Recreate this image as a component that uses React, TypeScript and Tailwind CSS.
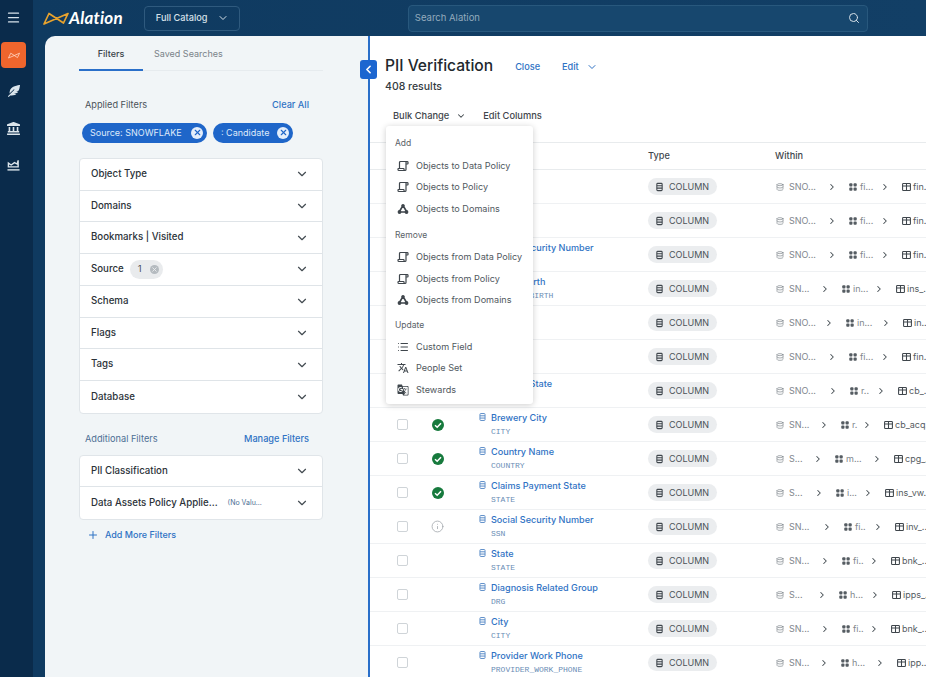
import { ChevronDown, ChevronLeft, ChevronRight, Database, Info, List, Menu, Plus, Scroll, Search, X } from "lucide-react";
import { FaFeatherAlt, FaLandmark } from "react-icons/fa";
import { MdGTranslate, MdTranslate } from "react-icons/md";

type Row = {
  name?: string;
  sub?: string;
  status?: "ok" | "info";
  a: string;
  w1: number;
  b: string;
  w2: number;
  c: string;
};

// rows 0, 1, 4 and 5 sit fully behind the open menu
const rows: Row[] = [
  { a: "SNO...", w1: 73, b: "fi...", w2: 53, c: "fin.." },
  { a: "SNO...", w1: 73, b: "fi...", w2: 53, c: "fin.." },
  { name: "Social Security Number", sub: "SSN", a: "SNO...", w1: 73, b: "fi...", w2: 53, c: "fin.." },
  { name: "Date of Birth", sub: "DATE_OF_BIRTH", a: "SN...", w1: 66, b: "in...", w2: 54, c: "ins_.." },
  { a: "SNO...", w1: 70, b: "in...", w2: 57, c: "in.." },
  { a: "SNO...", w1: 73, b: "fi...", w2: 53, c: "fin.." },
  { name: "Brewery State", sub: "STATE", a: "SNO...", w1: 74, b: "r..", w2: 48, c: "cb_.." },
  { name: "Brewery City", sub: "CITY", status: "ok", a: "SN...", w1: 65, b: "r.", w2: 43, c: "cb_acq.." },
  { name: "Country Name", sub: "COUNTRY", status: "ok", a: "S...", w1: 59, b: "m...", w2: 59, c: "cpg_.." },
  { name: "Claims Payment State", sub: "STATE", status: "ok", a: "S...", w1: 60, b: "i...", w2: 49, c: "ins_vw.." },
  { name: "Social Security Number", sub: "SSN", status: "info", a: "SN...", w1: 68, b: "fi..", w2: 51, c: "inv_.." },
  { name: "State", sub: "STATE", a: "SN...", w1: 66, b: "fi..", w2: 49, c: "bnk_.." },
  { name: "Diagnosis Related Group", sub: "DRG", a: "S...", w1: 63, b: "h...", w2: 53, c: "ipps_.." },
  { name: "City", sub: "CITY", a: "SN...", w1: 66, b: "fi..", w2: 49, c: "bnk_.." },
  { name: "Provider Work Phone", sub: "PROVIDER_WORK_PHONE", a: "SN...", w1: 65, b: "h...", w2: 56, c: "ipp..." },
];

const ColumnIcon = ({ className }: { className?: string }) => (
  <svg viewBox="0 0 10 12" className={className} fill="none" stroke="currentColor" strokeWidth="1.5">
    <rect x="1.2" y="0.8" width="7.6" height="10.4" rx="1.2" />
    <path d="M1.2 4.2h7.6M1.2 7.6h7.6" />
  </svg>
);

const SchemaIcon = () => (
  <svg viewBox="0 0 9 9" className="h-[8px] w-[8px] shrink-0" fill="#555c62">
    <rect x="0.3" y="0.3" width="3.6" height="3.6" rx="1" />
    <rect x="5.1" y="0.3" width="3.6" height="3.6" rx="1" />
    <rect x="0.3" y="5.1" width="3.6" height="3.6" rx="1" />
    <rect x="5.1" y="5.1" width="3.6" height="3.6" rx="1" />
  </svg>
);

const TableIcon = () => (
  <svg viewBox="0 0 10 9" className="h-[8px] w-[9px] shrink-0" fill="none" stroke="#3f464c" strokeWidth="1.2">
    <rect x="0.6" y="0.6" width="8.8" height="7.8" rx="0.8" />
    <path d="M0.6 3.4h8.8M5 0.6v7.8" />
  </svg>
);

const DomainIcon = () => (
  <svg viewBox="0 0 12 12" className="h-[12px] w-[12px]" fill="currentColor" stroke="currentColor">
    <path d="M6 2.4 9.8 9H2.2Z" fill="none" strokeWidth="1.7" strokeLinejoin="round" />
    <circle cx="6" cy="2.6" r="1.7" stroke="none" />
    <circle cx="2.5" cy="9" r="1.9" stroke="none" />
    <circle cx="9.5" cy="9" r="1.9" stroke="none" />
  </svg>
);

const LogoMark = ({ className, color }: { className?: string; color: string }) => (
  <svg viewBox="0 0 26 13" className={className} fill="none" stroke={color} strokeWidth="1.7" strokeLinejoin="round">
    <path d="M1 12 6 1.5 20.5 11 25 1.5Z" />
  </svg>
);

const ChartIcon = () => (
  <svg viewBox="0 0 14 14" className="h-[13px] w-[13px]" fill="none" stroke="#dbe5ec" strokeWidth="1.5">
    <path d="M1.5 9.5V5.5l3 2 3.5-2.5 3 1.5 1-4V9.5Z" />
    <path d="M.5 12.8h13" />
  </svg>
);

const AccordionRow = ({ label, children }: { label: string; children?: React.ReactNode }) => (
  <div className="flex h-[31.75px] items-center border-b border-[#dfe4e8] pl-[11px] pr-[13px] last:border-b-0">
    <span className="text-[9.7px] font-medium text-[#2b3238]">{label}</span>
    {children}
    <ChevronDown className="ml-auto h-[14px] w-[14px] text-[#444c52]" strokeWidth={2} />
  </div>
);

const MenuItem = ({ icon, label }: { icon: React.ReactNode; label: string }) => (
  <div className="flex h-[21.5px] items-center pl-[11px] text-[9.1px] text-[#50585e]">
    <span className="flex w-[19px] shrink-0 text-[#3f464c]">{icon}</span>
    {label}
  </div>
);

const scroll = <Scroll className="h-[12px] w-[12px] -scale-x-100" strokeWidth={2.4} />;
const domains = <DomainIcon />;

export default function App() {
  return (
    <div className="flex h-[677px] w-[926px] overflow-hidden bg-[#0f3a60] font-['Inter',sans-serif]">
      {/* icon rail */}
      <nav className="flex w-[33px] shrink-0 flex-col items-center bg-[#0a2b4b] pr-[6px] pt-[10px]">
        <Menu className="h-[15px] w-[15px] text-[#d8e3eb]" strokeWidth={2} />
        <div className="ml-[1px] mt-[17px] flex h-[26px] w-[25px] items-center justify-center self-start rounded-[4px] bg-[#ee652d]">
          <LogoMark className="h-[7px] w-[12px]" color="#ffd9c8" />
        </div>
        <FaFeatherAlt className="mt-[17px] h-[12px] w-[12px] text-[#dbe5ec]" />
        <FaLandmark className="mt-[25px] h-[13px] w-[13px] text-[#dbe5ec]" />
        <div className="mt-[23px] flex">
          <ChartIcon />
        </div>
      </nav>

      <div className="flex min-w-0 flex-1 flex-col">
        {/* top bar */}
        <header className="flex h-[36px] shrink-0 items-center bg-gradient-to-r from-[#0f3a60] to-[#123f66] pl-[10px]">
          <LogoMark className="h-[13px] w-[26px]" color="#e8a32e" />
          <span className="font-['Lato',sans-serif] text-[17px] font-bold italic tracking-[0.2px] text-white">Alation</span>
          <div className="ml-[21px] flex h-[25px] w-[96px] items-center rounded-[4px] border border-[#2f5a7e] pl-[11px] text-[9.2px] font-medium text-[#d6e1e9]">
            Full Catalog
            <ChevronDown className="ml-[10px] h-[12px] w-[12px]" strokeWidth={2} />
          </div>
          <div className="ml-[168px] flex h-[27px] w-[460px] items-center justify-between rounded-[4px] border border-[#28587d] bg-[#17476e] pl-[6px] pr-[7px] text-[9.5px] text-[#93abbd]">
            Search Alation
            <Search className="h-[12px] w-[12px] text-[#d6e1e9]" strokeWidth={2} />
          </div>
        </header>

        <main className="flex min-h-0 flex-1 pl-[12px]">
          {/* filters */}
          <aside className="w-[323px] shrink-0 rounded-tl-[10px] bg-[#f1f5f7] pl-[34px] pr-[45px]">
            <div className="flex h-[35px] items-end border-b border-[#e6ebee] text-[9px]">
              <div className="-mb-px flex h-full w-[64px] items-center justify-center border-b-2 border-[#2a6fc9] pt-[2px] font-medium text-[#3a4248]">Filters</div>
              <div className="ml-[11px] flex h-full items-center pt-[2px] text-[#7a8389]">Saved Searches</div>
            </div>
            <div className="mt-[27px] flex items-center justify-between pl-[6px] pr-[14px] text-[9.2px]">
              <span className="text-[#4a5258]">Applied Filters</span>
              <span className="font-medium text-[#2f72c4]">Clear All</span>
            </div>
            <div className="mt-[11px] flex gap-[6px] pl-[3px]">
              <div className="flex h-[20px] w-[125px] items-center justify-between rounded-full bg-[#1f66c9] pl-[8px] pr-[4px] text-[9px] text-[#dfeafa]">
                Source: SNOWFLAKE
                <span className="flex h-[12px] w-[12px] items-center justify-center rounded-full bg-[#e4eefb]">
                  <X className="h-[9px] w-[9px] text-[#1f66c9]" strokeWidth={3} />
                </span>
              </div>
              <div className="flex h-[20px] w-[80px] items-center justify-between rounded-full bg-[#1f66c9] pl-[8px] pr-[4px] text-[9px] text-[#dfeafa]">
                : Candidate
                <span className="flex h-[12px] w-[12px] items-center justify-center rounded-full bg-[#e4eefb]">
                  <X className="h-[9px] w-[9px] text-[#1f66c9]" strokeWidth={3} />
                </span>
              </div>
            </div>

            <div className="mt-[15px] rounded-[4px] border border-[#e0e5e9] bg-white">
              <AccordionRow label="Object Type" />
              <AccordionRow label="Domains" />
              <AccordionRow label="Bookmarks | Visited" />
              <AccordionRow label="Source">
                <span className="ml-[6px] flex h-[19px] w-[33px] items-center justify-between rounded-full bg-[#e9ebed] pl-[8px] pr-[4px] text-[9.5px] text-[#4a5258]">
                  1
                  <span className="flex h-[9px] w-[9px] items-center justify-center rounded-full bg-[#b4babf]">
                    <X className="h-[7px] w-[7px] text-[#eceeef]" strokeWidth={3} />
                  </span>
                </span>
              </AccordionRow>
              <AccordionRow label="Schema" />
              <AccordionRow label="Flags" />
              <AccordionRow label="Tags" />
              <AccordionRow label="Database" />
            </div>

            <div className="mt-[18px] flex items-center justify-between pl-[6px] pr-[14px] text-[9.2px]">
              <span className="text-[#4d6f94]">Additional Filters</span>
              <span className="font-medium text-[#2f72c4]">Manage Filters</span>
            </div>
            <div className="mt-[9px] rounded-[4px] border border-[#e0e5e9] bg-white">
              <AccordionRow label="PII Classification" />
              <AccordionRow label="Data Assets Policy Applie...">
                <span className="ml-[10px] text-[7px] text-[#4d6f94]">(No Valu...</span>
              </AccordionRow>
            </div>
            <div className="mt-[8px] flex items-center pl-[8px] text-[9px] font-medium text-[#2f72c4]">
              <Plus className="mr-[6px] h-[12px] w-[12px]" strokeWidth={2} />
              Add More Filters
            </div>
          </aside>

          {/* results */}
          <section className="relative min-w-0 flex-1 border-l-2 border-[#2a6fc9] bg-white">
            <button className="absolute -left-[10px] top-[24px] flex h-[19px] w-[17px] items-center justify-center rounded-[3px] bg-[#1c66d0]">
              <ChevronLeft className="h-[13px] w-[13px] text-white" strokeWidth={3} />
            </button>

            <div className="flex h-[41px] items-end pl-[15px]">
              <h1 className="text-[15.6px] font-medium leading-[22px] text-[#22282d]">PII Verification</h1>
              <span className="ml-[22px] pb-[3px] text-[9.2px] font-medium text-[#2f72c4]">Close</span>
              <span className="ml-[22px] flex items-center pb-[3px] text-[9.2px] font-medium text-[#2f72c4]">
                Edit
                <ChevronDown className="ml-[7px] h-[12px] w-[12px]" strokeWidth={2} />
              </span>
            </div>
            <div className="mt-[3px] pl-[15px] text-[10.5px] font-medium leading-[14px] text-[#343b41]">408 results</div>
            <div className="mt-[14px] flex h-[16px] items-center pl-[23px] text-[9.3px] font-medium text-[#3f464c]">
              Bulk Change
              <ChevronDown className="ml-[7px] h-[10px] w-[10px]" strokeWidth={2.5} />
              <span className="ml-[17px]">Edit Columns</span>
            </div>

            {/* table */}
            <div className="mt-[18px] flex h-[28px] items-center border-y border-[#e8ebed] text-[9.2px] font-medium text-[#3f464c]">
              <span className="ml-[278px] w-[127px]">Type</span>
              <span>Within</span>
            </div>
            {rows.map((row, i) => (
              <div key={i} className="flex h-[34px] shrink-0 items-center border-b border-[#eff1f3]">
                <span className="ml-[27px] h-[11px] w-[11px] shrink-0 rounded-[2px] border border-[#cfd4d8] bg-white" />
                <span className="ml-[23px] flex w-[13px] shrink-0 justify-center">
                  {row.status === "ok" && (
                    <svg viewBox="0 0 12 12" className="h-[12px] w-[12px]">
                      <circle cx="6" cy="6" r="6" fill="#177a3d" />
                      <path d="M3 6.2 5.2 8.3 9 4.2" fill="none" stroke="#fff" strokeWidth="1.5" />
                    </svg>
                  )}
                  {row.status === "info" && <Info className="h-[13px] w-[13px] text-[#a2a8ad]" strokeWidth={1.5} />}
                </span>
                <div className="ml-[35px] w-[169px] shrink-0">
                  {row.name && (
                    <>
                      <div className="flex items-center text-[9.1px] font-medium leading-[14px] text-[#2f72c4]">
                        <ColumnIcon className="mr-[5px] h-[8px] w-[7px] -translate-y-px text-[#5f8fc9]" />
                        <span className="whitespace-nowrap">{row.name}</span>
                      </div>
                      <div className="mt-[1px] whitespace-nowrap pl-[12px] font-['Liberation_Mono',monospace] text-[8px] leading-[12px] text-[#6a8db5]">{row.sub}</div>
                    </>
                  )}
                </div>
                <div className="flex h-[17px] w-[69px] shrink-0 items-center rounded-full bg-[#ebedef] pl-[8px] text-[9px] text-[#4a5258]">
                  <ColumnIcon className="mr-[6px] h-[10px] w-[7px] text-[#3f464c]" />
                  COLUMN
                </div>
                <div className="ml-[59px] flex shrink-0 items-center whitespace-nowrap text-[9px] text-[#7f878d]">
                  <div className="flex items-center" style={{ width: row.w1 }}>
                    <Database className="h-[8px] w-[8px] shrink-0" strokeWidth={2} />
                    <span className="ml-[5px]">{row.a}</span>
                    <ChevronRight className="ml-auto mr-[12px] h-[10px] w-[10px] text-[#444c52]" strokeWidth={2.5} />
                  </div>
                  <div className="flex items-center" style={{ width: row.w2 }}>
                    <SchemaIcon />
                    <span className="ml-[3px]">{row.b}</span>
                    <ChevronRight className="ml-auto mr-[12px] h-[10px] w-[10px] text-[#444c52]" strokeWidth={2.5} />
                  </div>
                  <TableIcon />
                  <span className="ml-[2px] text-[#555c62]">{row.c}</span>
                </div>
              </div>
            ))}

            {/* bulk change menu */}
            <div className="absolute left-[16px] top-[90px] h-[278px] w-[147px] rounded-[3px] bg-white pt-[11px] shadow-[0_1px_6px_rgba(0,0,0,0.2)]">
              <div className="pl-[9px] text-[8.5px] leading-[12px] text-[#5a6268]">Add</div>
              <div className="mt-[6px]">
                <MenuItem icon={scroll} label="Objects to Data Policy" />
                <MenuItem icon={scroll} label="Objects to Policy" />
                <MenuItem icon={domains} label="Objects to Domains" />
              </div>
              <div className="mt-[9px] pl-[9px] text-[8.5px] leading-[12px] text-[#5a6268]">Remove</div>
              <div className="mt-[6px]">
                <MenuItem icon={scroll} label="Objects from Data Policy" />
                <MenuItem icon={scroll} label="Objects from Policy" />
                <MenuItem icon={domains} label="Objects from Domains" />
              </div>
              <div className="mt-[8px] pl-[9px] text-[8.5px] leading-[12px] text-[#5a6268]">Update</div>
              <div className="mt-[5px]">
                <MenuItem icon={<List className="h-[12px] w-[12px]" strokeWidth={2} />} label="Custom Field" />
                <MenuItem icon={<MdTranslate className="h-[12px] w-[12px]" />} label="People Set" />
                <MenuItem icon={<MdGTranslate className="h-[12px] w-[12px]" />} label="Stewards" />
              </div>
            </div>
          </section>
        </main>
      </div>
    </div>
  );
}
